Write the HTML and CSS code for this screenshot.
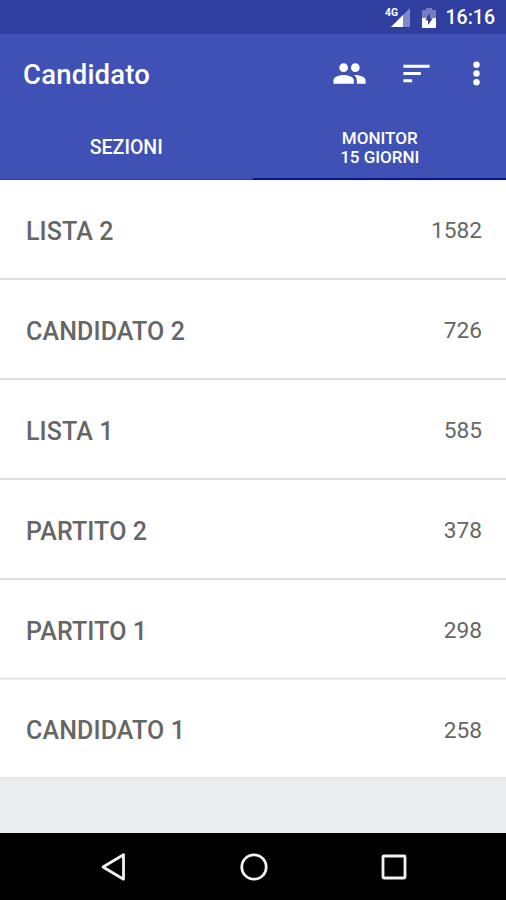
FILE: index.html
```html
<!DOCTYPE html>
<html lang="it">
<head>
<meta charset="utf-8">
<meta name="viewport" content="width=device-width">
<title>Candidato</title>
<link rel="stylesheet" href="styles.css">
</head>
<body>
<div class="screen">
  <div class="status">
    <svg class="signal" viewBox="0 0 26 22" aria-hidden="true">
      <path d="M25 2V21H6Z" fill="#8089c9"/>
      <path d="M18 9V21H6Z" fill="#fff"/>
      <text class="network" x="0" y="10" textLength="13" lengthAdjust="spacingAndGlyphs">4G</text>
    </svg>
    <svg class="battery" viewBox="0 0 14 20" aria-hidden="true">
      <path d="M4 0H10V2H14V10H0V2H4Z" fill="#747ec4"/>
      <path d="M0 10H14V19a1 1 0 0 1-1 1H1a1 1 0 0 1-1-1Z" fill="#fff"/>
      <path d="M8 5V10.300H10.800L6 17V12.200H3.200Z" fill="#303f9f"/>
    </svg>
    <span class="clock">16:16</span>
  </div>
  <header class="appbar">
    <div class="toolbar">
      <h1 class="title">Candidato</h1>
      <svg class="icon people" viewBox="0 0 24 24"><path d="M16 11c1.660 0 2.990-1.340 2.990-3S17.660 5 16 5s-3 1.340-3 3 1.340 3 3 3zm-8 0c1.660 0 2.990-1.340 2.990-3S9.660 5 8 5 5 6.340 5 8s1.340 3 3 3zm0 2c-2.330 0-7 1.170-7 3.500V19h14v-2.500C15 14.170 10.330 13 8 13zm8 0c-.29 0-.62.020-.97.050 1.160.84 1.970 1.970 1.970 3.450V19h6v-2.500c0-2.330-4.670-3.500-7-3.500z"/></svg>
      <svg class="icon sort" viewBox="0 0 24 24"><path d="M3 18h6v-2H3v2zM3 6v2h18V6H3zm0 7h12v-2H3v2z"/></svg>
      <svg class="icon more" viewBox="0 0 24 24"><circle cx="12" cy="6" r="2.200"/><circle cx="12" cy="12" r="2.200"/><circle cx="12" cy="18" r="2.200"/></svg>
    </div>
    <nav class="tabs">
      <div class="tab">SEZIONI</div>
      <div class="tab tab-active">MONITOR<br>15 GIORNI</div>
    </nav>
  </header>
  <main class="list">
    <div class="row"><span class="name">LISTA 2</span><span class="count">1582</span></div>
    <div class="row"><span class="name">CANDIDATO 2</span><span class="count">726</span></div>
    <div class="row"><span class="name">LISTA 1</span><span class="count">585</span></div>
    <div class="row"><span class="name">PARTITO 2</span><span class="count">378</span></div>
    <div class="row row-wide"><span class="name">PARTITO 1</span><span class="count">298</span></div>
    <div class="row row-last"><span class="name">CANDIDATO 1</span><span class="count">258</span></div>
  </main>
  <footer class="navbar">
    <svg class="key" viewBox="0 0 32 32"><path d="M6 16L26.500 3.800V28.200Z"/></svg>
    <svg class="key" viewBox="0 0 32 32"><circle cx="16" cy="16" r="12.200"/></svg>
    <svg class="key" viewBox="0 0 32 32"><rect x="5" y="5" width="22" height="22" rx="1"/></svg>
  </footer>
</div>
</body>
</html>
```
FILE: styles.css
```css
* { box-sizing: border-box; }

body {
  margin: 0;
  font-family: Roboto, "Liberation Sans", sans-serif;
}

.screen {
  display: flex;
  flex-direction: column;
  width: 506px;
  height: 900px;
  overflow: hidden;
  background: #ebecee;
}

.status {
  display: flex;
  align-items: center;
  justify-content: flex-end;
  height: 34px;
  padding: 2px 11px 0 0;
  background: #303f9f;
  color: #fff;
}

.signal {
  width: 26px;
  height: 22px;
  margin: 0 11px 2px 0;
}

.battery {
  width: 14px;
  height: 20px;
  margin-right: 10px;
}

.network {
  font: bold 10px Roboto, sans-serif;
  fill: #fff;
}

.clock {
  font-size: 19.500px;
  font-weight: 500;
  line-height: 24px;
}

.appbar {
  height: 146px;
  background: #3f51b5;
  color: #fff;
}

.toolbar {
  display: flex;
  align-items: center;
  height: 80px;
  padding: 0 12px 0 23px;
}

.title {
  flex: 1;
  margin: 0;
  padding-top: 2px;
  font-size: 27.500px;
  font-weight: 500;
  line-height: 32px;
  letter-spacing: 0.200px;
}

.icon {
  width: 35px;
  height: 35px;
  margin-bottom: 1px;
  fill: #fff;
}

.people { margin-right: 32px; }
.sort { margin-right: 25px; }

.tabs {
  display: flex;
  height: 66px;
}

.tab {
  display: flex;
  flex: 1;
  align-items: center;
  justify-content: center;
  padding-top: 1px;
  border-bottom: 1px solid #2f41a8;
  font-size: 19.500px;
  font-weight: 500;
  text-align: center;
}

.tab-active {
  padding: 4px 0 0 1px;
  border-bottom: 2px solid #08128c;
  font-size: 17px;
  line-height: 19px;
}

.list { background: #fff; }

.row {
  display: flex;
  align-items: center;
  justify-content: space-between;
  height: 100px;
  padding: 3px 24px 0 26px;
  border-bottom: 2px solid #dedede;
  color: #666;
}

.row-wide {
  padding-top: 4px;
  border-bottom: 3px solid #ebebeb;
}

.row-last {
  height: 98px;
  border-bottom: 1px solid #e0e0e0;
}

.name {
  padding-top: 1px;
  font-size: 25px;
  font-weight: 500;
  letter-spacing: 0.120px;
}

.count {
  font-size: 22.700px;
}

.navbar {
  display: flex;
  align-items: center;
  justify-content: space-between;
  height: 67px;
  margin-top: auto;
  padding: 0 96px 0 97px;
  background: #000;
}

.key {
  width: 32px;
  height: 32px;
  fill: none;
  stroke: #f2f2f2;
  stroke-width: 2.800;
  stroke-linejoin: round;
}
```
